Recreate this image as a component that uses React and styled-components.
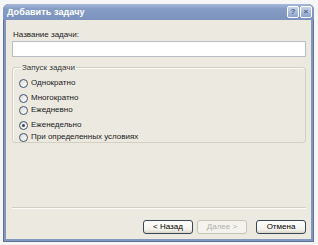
import React from "react";
import styled, { createGlobalStyle } from "styled-components";

const Global = createGlobalStyle`
  html, body {
    margin: 0;
    background: #f6f6f6;
  }
  body {
    font-family: "Liberation Sans", "DejaVu Sans", sans-serif;
    font-size: 8px;
    color: #1a1a1a;
  }
`;

const Page = styled.div`
  padding: 4px 4px 3px 3px;
  width: 318px;
  height: 245px;
  box-sizing: border-box;
`;

const Window = styled.div`
  display: flex;
  flex-direction: column;
  height: 238px;
  border-radius: 6px 6px 0 0;
  background: #8396bb;
  padding: 0 3px 3px 3px;
  box-sizing: border-box;
  box-shadow: inset 1px 0 0 #5f7399, inset -1px 0 0 #5f7399, inset 0 -1px 0 #5f7399;
`;

const TitleBar = styled.div`
  height: 16px;
  display: flex;
  align-items: center;
  justify-content: space-between;
  margin: 0 -3px;
  padding: 0 2px 0 4px;
  border-radius: 6px 6px 0 0;
  background: linear-gradient(#a8b9d8 0%, #869dc6 30%, #7b93bd 100%);
  color: #fff;
  font-size: 9px;
  font-weight: bold;
  letter-spacing: 0.1px;
`;

const TitleButtons = styled.div`
  display: flex;
  gap: 1px;
`;

const TitleButton = styled.div`
  width: 10px;
  height: 10px;
  border: 1px solid #fff;
  border-radius: 2px;
  background: linear-gradient(#c9d4e8, #8ea3c9);
  color: #4d5f86;
  font-size: 8px;
  font-weight: bold;
  line-height: 10px;
  text-align: center;
`;

const Body = styled.div`
  flex: 1;
  display: flex;
  flex-direction: column;
  background: #ece9e1;
  padding: 9px 5px 5px 6px;
`;

const Label = styled.div`
  margin-left: 1px;
  height: 11px;
  line-height: 11px;
`;

const Input = styled.div`
  margin-top: 1px;
  height: 14px;
  background: #fff;
  border: 1px solid #b9bec4;
`;

const Group = styled.fieldset`
  margin: 6px 0 0 0;
  padding: 0 0 0 6px;
  height: 78px;
  border: 1px solid #d3d0c3;
  border-radius: 3px;
  box-shadow: inset 1px 1px 0 #fbfaf6;
`;

const Legend = styled.legend`
  padding: 0 1px;
  margin-left: 2px;
  color: #333;
  line-height: 9px;
`;

const Row = styled.div`
  display: flex;
  align-items: center;
  gap: 3px;
  height: 10px;
  margin-top: ${(p) => p.$top}px;
  line-height: 10px;
`;

const Radio = styled.span`
  width: 7px;
  height: 7px;
  border-radius: 50%;
  border: 1px solid #3f5573;
  background: linear-gradient(135deg, #dcdad2, #fff);
  display: flex;
  align-items: center;
  justify-content: center;
  flex: none;
  &::after {
    content: "";
    width: 3px;
    height: 3px;
    border-radius: 50%;
    background: ${(p) => (p.$on ? "#3b4a5a" : "transparent")};
  }
`;

const Spacer = styled.div`
  flex: 1;
`;

const Separator = styled.div`
  border-top: 1px solid #d2cfc4;
  border-bottom: 1px solid #fdfcf9;
`;

const Buttons = styled.div`
  display: flex;
  justify-content: flex-end;
  margin-top: 11px;
`;

const Button = styled.div`
  width: 50px;
  height: 14px;
  box-sizing: border-box;
  margin-left: ${(p) => p.$gap || 0}px;
  border: 1px solid ${(p) => (p.$disabled ? "#c6c4b8" : "#3c4650")};
  border-radius: 3px;
  background: ${(p) =>
    p.$disabled ? "#f4f3ee" : "linear-gradient(#fff, #f3f2ed 70%, #d9d6cb)"};
  color: ${(p) => (p.$disabled ? "#b3b1a4" : "#000")};
  display: flex;
  align-items: center;
  justify-content: center;
  line-height: 12px;
`;

const options = [
  { id: 1, text: "Однократно", top: 6 },
  { id: 2, text: "Многократно", top: 5 },
  { id: 3, text: "Ежедневно", top: 2 },
  { id: 4, text: "Еженедельно", top: 5, on: true },
  { id: 5, text: "При определенных условиях", top: 2 },
];

export default function App() {
  return (
    <Page>
      <Global />
      <Window>
        <TitleBar>
          <span>Добавить задачу</span>
          <TitleButtons>
            <TitleButton>?</TitleButton>
            <TitleButton>×</TitleButton>
          </TitleButtons>
        </TitleBar>
        <Body>
          <Label>Название задачи:</Label>
          <Input />
          <Group>
            <Legend>Запуск задачи</Legend>
            {options.map((o) => (
              <Row key={o.id} $top={o.top}>
                <Radio $on={o.on} />
                <span>{o.text}</span>
              </Row>
            ))}
          </Group>
          <Spacer />
          <Separator />
          <Buttons>
            <Button>&lt; Назад</Button>
            <Button $gap={4} $disabled>
              Далее &gt;
            </Button>
            <Button $gap={9}>Отмена</Button>
          </Buttons>
        </Body>
      </Window>
    </Page>
  );
}
